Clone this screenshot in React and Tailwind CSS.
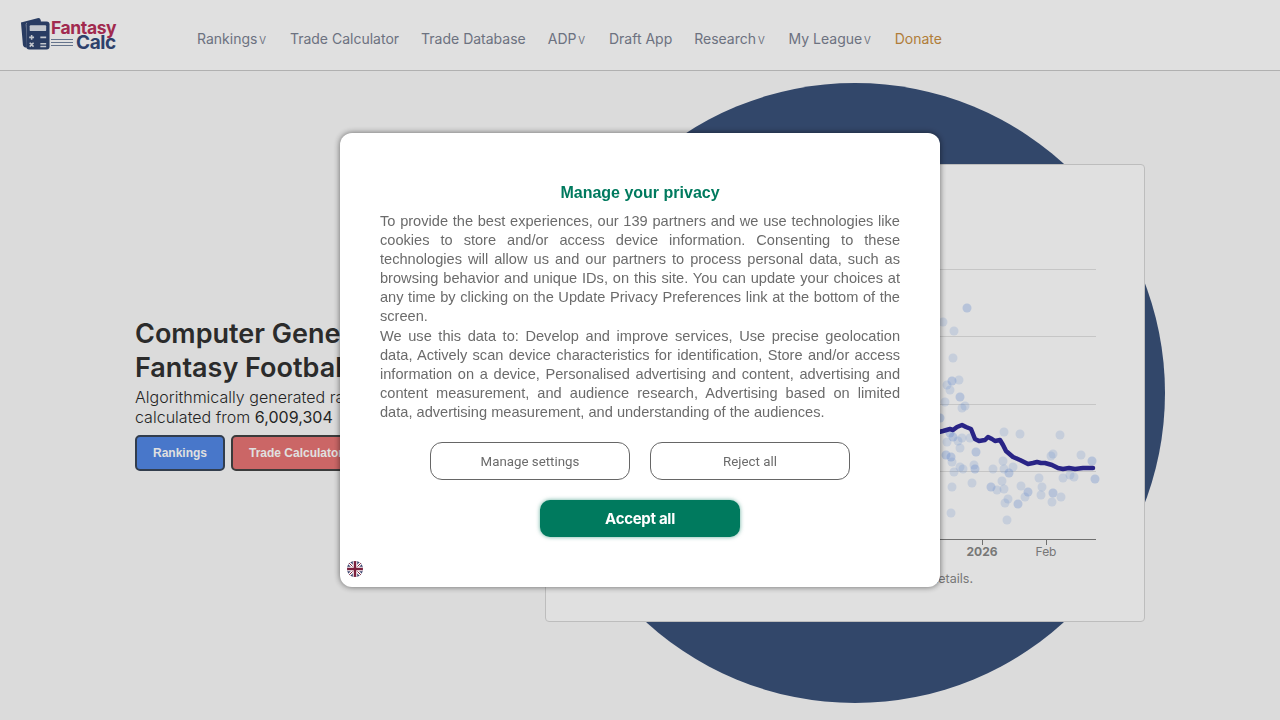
import React from 'react';

const navItems = [
    { label: 'Rankings', caret: true },
    { label: 'Trade Calculator' },
    { label: 'Trade Database' },
    { label: 'ADP', caret: true },
    { label: 'Draft App' },
    { label: 'Research', caret: true },
    { label: 'My League', caret: true },
];

const dots = [
    [967, 308], [943, 322], [954, 331], [953, 358], [952, 381], [947, 385], [959, 380], [950, 390], [960, 397], [962, 408],
    [965, 406], [945, 402], [940, 418], [1004, 432], [1020, 434], [1060, 435], [976, 452], [1053, 454], [1051, 456], [1081, 455],
    [1092, 461], [1003, 461], [974, 465], [960, 467], [951, 457], [952, 462], [954, 472], [963, 469], [975, 469], [993, 469],
    [1004, 469], [1013, 467], [1009, 473], [1039, 478], [1063, 478], [1074, 477], [1095, 479], [1002, 481], [972, 483], [952, 487],
    [991, 487], [997, 490], [1004, 489], [1021, 486], [1028, 492], [1042, 487], [1025, 497], [1041, 495], [1053, 493], [1061, 497],
    [1008, 499], [1005, 503], [1018, 504], [1052, 502], [951, 513], [1007, 520], [953, 437], [960, 448], [947, 442], [962, 438],
    [950, 433], [970, 438], [1070, 475], [958, 441], [946, 455],
];

const trend = '935,433 943,431 950,429 953,430 957,427 962,425 966,427 971,429 973,434 975,439 979,441 985,440 988,437 992,439 995,441 1000,440 1003,445 1006,451 1013,457 1020,460 1028,464 1033,463 1037,462 1041,463 1045,463 1052,465 1058,468 1063,469 1069,468 1075,469 1083,468 1088,468 1093,468';

const Logo = () => (
    <div className="flex items-center w-[97px] h-[34px] mt-[-3px]">
        <svg width="31" height="34" viewBox="0 0 32 34" className="shrink-0">
            <path d="M1 5 L19 0.5 Q21 0.5 21.5 3 L21.5 5 L8 5 Q6 5 6 7 L7 31 Q3.5 31 3 28 Z" fill="#2f4570" />
            <rect x="6.5" y="4" width="24" height="29" rx="3" fill="#2f4570" />
            <rect x="10" y="8" width="17" height="6" rx="1" fill="#dfe3ea" />
            <path d="M12 18v5M9.5 20.5h5M21 20.5h6M10 26l4 4M14 26l-4 4M21 27h6M21 30h6" stroke="#dfe3ea" strokeWidth="1.6" fill="none" />
        </svg>
        <div className="flex flex-col font-['Inter',sans-serif] font-bold leading-[14px] text-[17.5px] tracking-[-0.4px] mt-[3px]">
            <span className="text-[#b8305a] whitespace-nowrap">Fantasy</span>
            <div className="flex items-center gap-[3px] mt-[1px]">
                <span className="flex flex-col gap-[2px] w-[22px]">
                    <span className="h-[1px] bg-[#7484a0]" />
                    <span className="h-[1px] bg-[#7484a0]" />
                    <span className="h-[1px] bg-[#7484a0]" />
                </span>
                <span className="text-[#34497a] text-[19px]">Calc</span>
            </div>
        </div>
    </div>
);

const Header = () => (
    <header className="h-[71px] bg-white border-b border-[#c9c9c9] flex items-center pl-[20px]">
        <Logo />
        <nav className="flex items-baseline gap-[22px] ml-[80px] mt-[8px] text-[14px] text-[#7b8292]">
            {navItems.map((item) => (
                <a key={item.label} className="flex items-baseline">
                    {item.label}
                    {item.caret && <span className="w-[10.5px] text-center text-[13px] font-light">v</span>}
                </a>
            ))}
            <a className="text-[#c98f42]">Donate</a>
        </nav>
    </header>
);

const Chart = () => (
    <div className="relative w-[600px] h-[458px] shrink-0 bg-white border border-[#d8d8d8] rounded-[4px]">
        <svg width="598" height="456" viewBox="546 165 598 456" className="absolute inset-0">
            {[269.5, 336.5, 404.5, 471.5].map((y) => (
                <line key={y} x1="590" x2="1096" y1={y} y2={y} stroke="#e2e2e2" />
            ))}
            {dots.map(([x, y], i) => (
                <circle key={i} cx={x} cy={y} r="4.5" fill="#6f9be8" fillOpacity={i % 4 === 0 ? 0.32 : 0.2} />
            ))}
            <polyline points={trend} fill="none" stroke="#2f2a99" strokeWidth="4.5" strokeLinejoin="round" strokeLinecap="round" />
            <line x1="590" x2="1096" y1="539.5" y2="539.5" stroke="#808080" />
            <line x1="982.5" x2="982.5" y1="540" y2="545" stroke="#808080" />
            <line x1="1046.5" x2="1046.5" y1="540" y2="545" stroke="#808080" />
            <text x="982" y="556" textAnchor="middle" fontSize="12" fontWeight="700" fill="#888" fontFamily="Inter, sans-serif">2026</text>
            <text x="1046" y="556" textAnchor="middle" fontSize="12" fill="#888" fontFamily="Inter, sans-serif">Feb</text>
        </svg>
        <p className="absolute top-[405px] right-[171px] text-[12.5px] text-[#888]">details.</p>
    </div>
);

const Hero = () => (
    <section className="relative h-[649px] bg-[#fafafa] overflow-hidden flex items-center pl-[135px]">
        <div className="absolute left-[545px] top-[12px] w-[620px] h-[620px] rounded-full bg-[#3a5179]" />
        <div className="relative flex items-center w-[1010px] mt-[-6px]">
            <div className="w-[410px] shrink-0 mt-[2px]">
                <h1 className="text-[27px] leading-[34px] font-semibold text-[#323232] whitespace-nowrap mt-[1px]">
                    Computer Generated
                    <br />
                    Fantasy Football Values
                </h1>
                <p className="text-[16px] tracking-[0.02px] leading-[20px] font-light text-[#2a2a2a] mt-[2px] whitespace-nowrap">
                    Algorithmically generated rankings
                    <br />
                    calculated from <span className="font-normal">6,009,304</span>
                </p>
                <div className="flex gap-[6px] mt-[8px]">
                    <button className="w-[90px] h-[36px] rounded-[5px] border-2 border-[#3a4658] bg-[#5288e6] text-white text-[12px] font-bold font-['Liberation_Sans',sans-serif]">
                        Rankings
                    </button>
                    <button className="w-[130px] h-[36px] rounded-[5px] border-2 border-[#444] bg-[#e87575] text-white text-[12px] font-bold font-['Liberation_Sans',sans-serif]">
                        Trade Calculator
                    </button>
                </div>
            </div>
            <Chart />
        </div>
    </section>
);

const FlagUK = () => (
    <svg width="16" height="16" viewBox="0 0 16 16">
        <defs>
            <clipPath id="flag-circle">
                <circle cx="8" cy="8" r="8" />
            </clipPath>
        </defs>
        <g clipPath="url(#flag-circle)">
            <rect width="16" height="16" fill="#39406b" />
            <path d="M0 0 16 16M16 0 0 16" stroke="#fff" strokeWidth="3" />
            <path d="M0 0 16 16M16 0 0 16" stroke="#7a1f3d" strokeWidth="1" />
            <path d="M8 0V16M0 8H16" stroke="#fff" strokeWidth="4.5" />
            <path d="M8 0V16M0 8H16" stroke="#7a1f3d" strokeWidth="2.5" />
        </g>
    </svg>
);

const PrivacyModal = () => (
    <div className="fixed inset-0 bg-black/[0.12] flex items-start justify-center pt-[133px]">
        <div className="relative w-[600px] h-[454px] bg-white rounded-[12px] shadow-[0_0_6px_rgba(0,0,0,0.55)] px-[40px] pt-[50px] font-['Liberation_Sans',sans-serif]">
            <h2 className="text-center text-[16px] leading-[20px] font-bold text-[#007a5e]">Manage your privacy</h2>
            <div className="mt-[9px] text-[14.6px] leading-[19.1px] text-[#6b6b6b] text-justify">
                <p>
                    To provide the best experiences, our 139 partners and we use technologies like cookies to store and/or access device information. Consenting to these technologies will allow us and our partners to process personal data, such as browsing behavior and unique IDs, on this site. You can update your choices at any time by clicking on the Update Privacy Preferences link at the bottom of the screen.
                </p>
                <p>
                    We use this data to: Develop and improve services, Use precise geolocation data, Actively scan device characteristics for identification, Store and/or access information on a device, Personalised advertising and content, advertising and content measurement, and audience research, Advertising based on limited data, advertising measurement, and understanding of the audiences.
                </p>
            </div>
            <div className="flex justify-center gap-[20px] mt-[20px]">
                <button className="w-[200px] h-[38px] pt-[1px] rounded-[12px] border border-[#666] bg-white text-[13.3px] text-[#6b6b6b] font-['Roboto',sans-serif]">
                    Manage settings
                </button>
                <button className="w-[200px] h-[38px] pt-[1px] rounded-[12px] border border-[#666] bg-white text-[13.3px] text-[#6b6b6b] font-['Roboto',sans-serif]">
                    Reject all
                </button>
            </div>
            <div className="flex justify-center mt-[20px]">
                <button className="w-[200px] h-[37px] pt-[1px] rounded-[10px] bg-[#007a5e] text-white text-[15px] font-bold font-['Inter',sans-serif] tracking-[-0.3px] shadow-[0_0_4px_rgba(0,122,94,0.6)]">
                    Accept all
                </button>
            </div>
            <div className="absolute left-[7px] bottom-[10px] flex">
                <FlagUK />
            </div>
        </div>
    </div>
);

export default function App() {
    return (
        <div className="w-[1280px] h-[720px] overflow-hidden font-['Inter',sans-serif]">
            <Header />
            <Hero />
            <PrivacyModal />
        </div>
    );
}
